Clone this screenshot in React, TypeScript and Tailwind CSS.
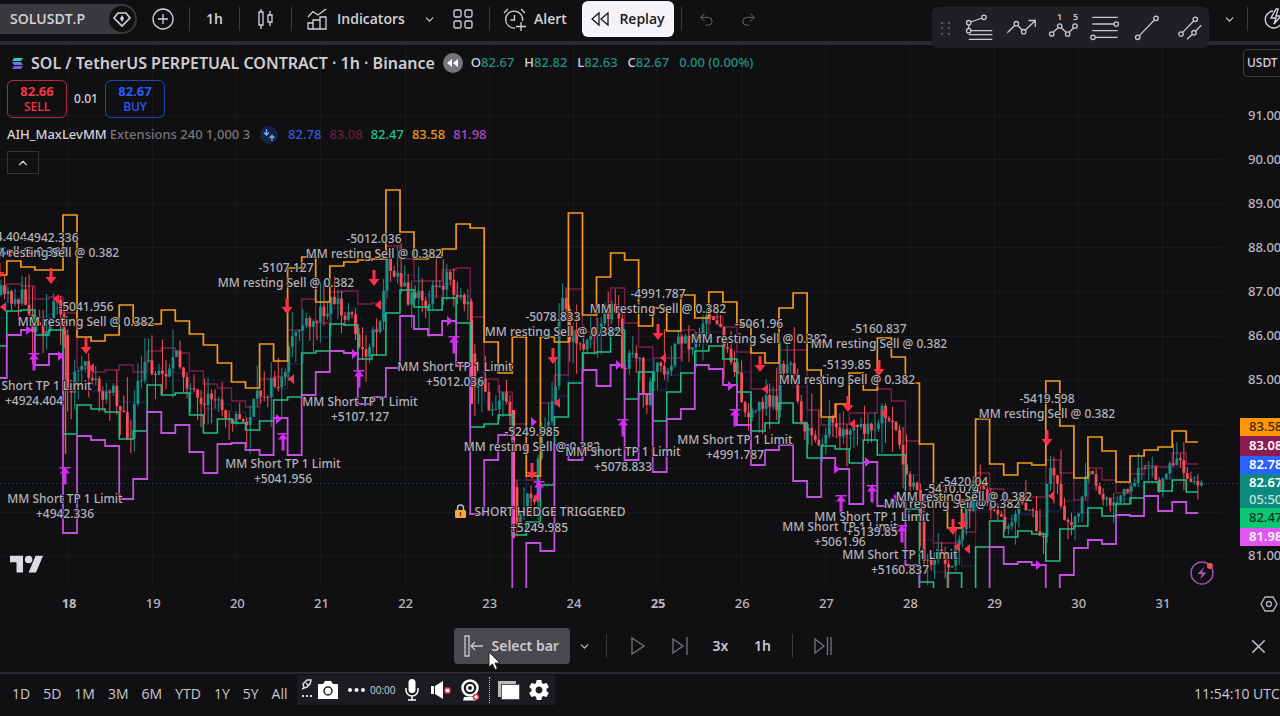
import { ReactNode } from "react";
import { ChevronDown, ChevronUp, Undo2, Redo2, X } from "lucide-react";

const STEP = 14.04;
const X0 = 63;
const FIRST = -5;
const LAST_X = 1198;

// one level per 4h block, 600 means the level is below the pane
const ORANGE = [
  275, 261, 267, 270, 270, 215, 337, 341, 335, 305, 323, 324, 310, 321, 334, 345, 363, 382, 388, 344, 361, 268, 257,
  302, 266, 262, 260, 259, 190, 232, 259, 257, 249, 224, 228, 342, 373, 337, 476, 337, 342, 213, 315, 277, 253, 260,
  326, 308, 331, 295, 318, 292, 302, 325, 353, 363, 308, 293, 370, 417, 404, 373, 390, 338, 357, 383, 444, 497, 528,
  500, 419, 464, 475, 463, 465, 381, 426, 478, 437, 451, 482, 456, 450, 447, 431, 442,
];
const PURPLE = [
  378, 335, 330, 365, 354, 533, 436, 440, 446, 499, 479, 412, 433, 425, 452, 473, 444, 443, 450, 455, 418, 455, 395,
  372, 351, 353, 404, 397, 368, 316, 329, 335, 321, 366, 514, 460, 435, 600, 543, 551, 445, 460, 370, 386, 365, 460,
  394, 472, 419, 409, 365, 369, 385, 425, 465, 450, 445, 481, 497, 458, 469, 504, 462, 506, 499, 565, 600, 600, 600,
  600, 600, 547, 564, 562, 565, 600, 575, 548, 540, 544, 515, 516, 496, 511, 502, 513,
];
const GREEN = [
  346, 311, 310, 335, 330, 434, 405, 409, 412, 439, 431, 385, 395, 393, 415, 433, 419, 423, 430, 421, 400, 397, 353,
  351, 324, 325, 359, 355, 313, 290, 307, 310, 298, 323, 427, 424, 415, 535, 522, 485, 417, 383, 353, 352, 330, 399,
  372, 421, 392, 373, 351, 346, 359, 392, 431, 423, 403, 423, 458, 446, 449, 463, 440, 455, 455, 509, 582, 600, 573,
  600, 547, 521, 537, 531, 534, 561, 529, 526, 508, 516, 504, 498, 482, 491, 480, 492,
];
const MAROON = [
  290, 284, 286, 299, 297, 313, 368, 372, 370, 365, 372, 351, 348, 353, 371, 384, 388, 401, 407, 379, 377, 330, 299,
  323, 292, 291, 304, 303, 246, 259, 281, 281, 270, 268, 317, 379, 392, 424, 480, 403, 375, 289, 332, 313, 288, 323,
  347, 358, 358, 330, 333, 317, 327, 352, 389, 390, 350, 350, 410, 425, 424, 413, 413, 389, 401, 441, 497, 543, 543,
  532, 473, 489, 500, 497, 497, 460, 473, 500, 468, 480, 493, 474, 466, 467, 453, 464,
];
const BLUE = GREEN.map((g, i) => Math.round((g + MAROON[i]) / 2));

// [x, close] turning points of the hourly series
const CLOSES = [
  [0, 295], [10, 297], [21, 298], [28, 305], [33, 328], [40, 318], [46, 335], [52, 310], [62, 305], [64, 330],
  [67, 395], [77, 370], [91, 372], [105, 405], [112, 375], [119, 408], [131, 442], [136, 395], [147, 362], [161, 375],
  [175, 358], [183, 370], [189, 385], [203, 418], [210, 395], [217, 400], [231, 415], [245, 425], [259, 395],
  [274, 385], [286, 380], [291, 335], [302, 325], [310, 330], [323, 308], [337, 297], [343, 323], [353, 307],
  [358, 348], [363, 356], [372, 337], [382, 313], [385, 267], [390, 260], [400, 280], [407, 297], [413, 292],
  [427, 305], [435, 287], [443, 290], [448, 262], [453, 280], [457, 307], [465, 300], [469, 313], [473, 395],
  [480, 382], [486, 395], [490, 407], [502, 397], [511, 415], [515, 520], [527, 503], [535, 495], [540, 425],
  [547, 420], [555, 400], [557, 360], [560, 290], [565, 292], [568, 340], [577, 337], [583, 347], [593, 337],
  [603, 313], [613, 310], [619, 325], [623, 367], [633, 357], [640, 367], [647, 405], [652, 375], [658, 360],
  [663, 380], [670, 380], [673, 347], [680, 340], [690, 343], [708, 320], [720, 330], [727, 347], [737, 367],
  [743, 410], [752, 420], [763, 400], [777, 403], [780, 367], [793, 370], [800, 410], [807, 437], [820, 440],
  [830, 423], [840, 440], [853, 427], [867, 430], [872, 440], [880, 410], [887, 427], [897, 430], [902, 473],
  [917, 487], [921, 513], [924, 567], [937, 553], [947, 560], [953, 563], [962, 527], [968, 510], [975, 483],
  [980, 493], [990, 500], [1000, 507], [1005, 528], [1017, 507], [1030, 507], [1037, 527], [1043, 547], [1047, 493],
  [1050, 467], [1057, 480], [1063, 513], [1070, 520], [1080, 510], [1087, 470], [1097, 487], [1107, 503], [1123, 493],
  [1140, 470], [1153, 470], [1160, 487], [1173, 460], [1183, 467], [1192, 483], [1202, 481],
];

function stepPath(levels: number[]) {
  let d = "";
  levels.forEach((y, i) => {
    const x1 = X0 + (FIRST + i) * STEP;
    const x2 = Math.min(x1 + STEP, LAST_X);
    d += `${i === 0 ? "M" : "L"}${x1.toFixed(1)} ${y}H${x2.toFixed(1)}`;
  });
  return d;
}

function closeAt(x: number) {
  const i = CLOSES.findIndex((p) => p[0] >= x);
  if (i <= 0) return CLOSES[0][1];
  const [ax, ay] = CLOSES[i - 1];
  const [bx, by] = CLOSES[i];
  return ay + ((by - ay) * (x - ax)) / (bx - ax);
}

function buildCandles() {
  let seed = 11;
  const rnd = () => {
    seed = (seed * 16807) % 2147483647;
    return seed / 2147483647;
  };
  const out = [];
  let prev = closeAt(0);
  for (let x = 1; x < 1202; x += 3.51) {
    // the last days trade in a tighter range
    const range = x > 1075 ? 0.6 : 1;
    const close = closeAt(x) + (rnd() - 0.5) * 20 * range;
    const top = Math.min(prev, close) - rnd() * rnd() * 40 * range;
    const bottom = Math.max(prev, close) + rnd() * rnd() * 40 * range;
    out.push({ x, open: prev, close, top, bottom, up: close < prev });
    prev = close;
  }
  return out;
}

const CANDLES = buildCandles();

const SELLS: [number, number, string][] = [
  [-1, 236, "-4924.404"],
  [51, 237, "-4942.336"],
  [86, 306, "-5041.956"],
  [286, 267, "-5107.127"],
  [374, 238, "-5012.036"],
  [553, 316, "-5078.833"],
  [532, 431, "-5249.985"],
  [658, 293, "-4991.787"],
  [759, 323, "-5061.96"],
  [847, 364, "-5139.85"],
  [879, 328, "-5160.837"],
  [952, 488, "-5410.074"],
  [964, 481, "-5420.04"],
  [1047, 398, "-5419.598"],
];

const EXITS: [number, number, string][] = [
  [34, 385, "+4924.404"],
  [65, 498, "+4942.336"],
  [283, 463, "+5041.956"],
  [360, 401, "+5107.127"],
  [455, 366, "+5012.036"],
  [623, 451, "+5078.833"],
  [735, 439, "+4991.787"],
  [840, 526, "+5061.96"],
  [872, 516, "+5139.85"],
  [900, 554, "+5160.837"],
];

const DOWN_ARROWS = [
  [-1, 263], [51, 268], [86, 338], [287, 298], [374, 270], [553, 348], [532, 463], [658, 324], [760, 356], [848, 396],
  [879, 360], [953, 519], [963, 513], [1047, 430],
];
const UP_ARROWS = [
  [34, 353], [65, 467], [283, 433], [359, 370], [454, 336], [539, 481], [623, 419], [735, 409], [841, 495],
  [872, 485], [902, 525],
];
const LEFT_MARKS = [
  [3, 307], [56, 299], [91, 368], [291, 379], [378, 305], [557, 403], [536, 497], [663, 358], [765, 389], [852, 424],
  [883, 413], [957, 547], [967, 549], [1051, 496],
];
const RIGHT_MARKS = [
  [29, 330], [61, 356], [279, 419], [355, 354], [450, 321], [534, 422], [619, 365], [731, 386], [837, 469],
  [868, 462], [897, 499], [1039, 565],
];

const DAYS = ["18", "19", "20", "21", "22", "23", "24", "25", "26", "27", "28", "29", "30", "31"];
const PRICES = ["91.00", "90.00", "89.00", "88.00", "87.00", "86.00", "85.00", "", "", "", "81.00"];
const RANGES = ["1D", "5D", "1M", "3M", "6M", "YTD", "1Y", "5Y", "All"];

function Divider() {
  return <span className="h-6 w-px shrink-0 bg-[#3c3b40]" />;
}

function Icon({ w = 28, h = 28, children }: { w?: number; h?: number; children: ReactNode }) {
  return (
    <svg
      width={w}
      height={h}
      viewBox={`0 0 ${w} ${h}`}
      fill="none"
      stroke="currentColor"
      strokeWidth="1.3"
      className="shrink-0 overflow-visible"
      aria-hidden="true"
    >
      {children}
    </svg>
  );
}

function TopBar() {
  return (
    <header className="flex h-[41px] shrink-0 items-center overflow-hidden pb-[3px] font-['Open_Sans',sans-serif] text-[#d5d3d7]">
      <div className="flex h-[30px] w-[137px] shrink-0 items-center justify-between rounded-r-full bg-[#3a393d] pl-[10px] pr-[2px]">
        <button className="text-sm font-semibold">SOLUSDT.P</button>
        <button aria-label="Symbol badge" className="flex size-[26px] items-center justify-center rounded-full bg-[#111013]">
          <Icon w={18} h={18}>
            <path d="M5 3H13L17 8L9 16L1 8Z" strokeWidth="1.6" />
            <path d="M9 5L11 8.500L9 12L7 8.500Z" fill="currentColor" stroke="none" />
          </Icon>
        </button>
      </div>
      <button aria-label="Add symbol" className="flex w-[52px] shrink-0 justify-center">
        <Icon w={22} h={22}>
          <circle cx="11" cy="11" r="10" />
          <path d="M11 6V16M6 11H16" />
        </Icon>
      </button>
      <Divider />
      <button className="w-[49px] shrink-0 text-sm font-semibold">1h</button>
      <Divider />
      <button aria-label="Chart type" className="flex w-[51px] shrink-0 justify-center">
        <Icon w={16} h={22}>
          <path d="M1 4H5V17H1ZM3 1V4M3 17V21M10 7H14V14H10ZM12 3V7M12 14V18" />
        </Icon>
      </button>
      <Divider />
      <button className="flex w-[121px] shrink-0 items-center gap-[10px] pl-[15px] text-sm font-semibold">
        <Icon w={20} h={20}>
          <path d="M1 8L6 2.500L11 6L19 0M1 20V14H6V20M6 20V11H13V20M13 20V8H19V20ZM1 20H19" />
        </Icon>
        Indicators
      </button>
      <button aria-label="Favourite indicators" className="flex w-[32px] shrink-0 justify-center">
        <ChevronDown size={13} strokeWidth={2} />
      </button>
      <button aria-label="Templates" className="flex w-[36px] shrink-0 justify-center">
        <Icon w={20} h={20}>
          <rect x="1" y="1" width="7" height="7" rx="1.500" />
          <rect x="12" y="1" width="7" height="7" rx="1.500" />
          <rect x="1" y="12" width="7" height="7" rx="1.500" />
          <rect x="12" y="12" width="7" height="7" rx="1.500" />
        </Icon>
      </button>
      <span className="w-2 shrink-0" />
      <Divider />
      <button className="flex w-[92px] shrink-0 items-center gap-2 pl-[13px] text-sm font-semibold">
        <Icon w={23} h={23}>
          <path d="M12 20A8.500 8.500 0 1 1 19.500 13M11.500 7V12H7.500M1 5L5 1M18 1L22 5M18 14V23M13 18.500H23" />
        </Icon>
        Alert
      </button>
      <button className="flex h-9 w-[92px] shrink-0 items-center justify-center gap-[10px] rounded-md bg-[#f6f3f8] text-sm font-semibold text-[#1a191c]">
        <Icon w={18} h={14}>
          <path d="M8 1V13L1 7ZM17 1V13L10 7Z" />
        </Icon>
        Replay
      </button>
      <span className="w-[7px] shrink-0" />
      <Divider />
      <button aria-label="Undo" className="flex w-[48px] shrink-0 justify-center text-[#66656a]">
        <Undo2 size={17} strokeWidth={1.4} />
      </button>
      <button aria-label="Redo" className="flex w-[36px] shrink-0 justify-center text-[#66656a]">
        <Redo2 size={17} strokeWidth={1.4} />
      </button>
      <div className="ml-auto flex shrink-0 items-center">
        <button aria-label="Layouts" className="flex w-[36px] justify-center">
          <ChevronDown size={13} strokeWidth={2} />
        </button>
        <Divider />
        <button aria-label="Quick search" className="flex w-8 justify-end overflow-hidden pl-4">
          <svg width="16" height="22" viewBox="0 0 16 22" fill="none" stroke="currentColor" strokeWidth="1.4">
            <path d="M9 3A8.500 8.500 0 1 0 17 16M12 1L7 10H12L10 16L17 8H12L14 1Z" />
          </svg>
        </button>
      </div>
    </header>
  );
}

function DrawingToolbar() {
  return (
    <div className="absolute right-[71px] top-[7px] flex h-[41px] items-center rounded-md bg-[#201f23] pl-[9px] pr-[4px] text-[#c9c7cc]">
      <Icon w={10} h={14}>
        <g fill="#59585d" stroke="none">
          <path d="M0 1h2v2H0zM7 1h2v2H7zM0 6h2v2H0zM7 6h2v2H7zM0 12h2v2H0zM7 12h2v2H7z" />
        </g>
      </Icon>
      <div className="ml-[14px] flex gap-3 pb-px">
        <button aria-label="Trend-based fib extension">
          <Icon w={30}>
            <path d="M5.500 9L17 5M3.700 12V15.500M6 17.700H27.300M3.700 21.700H27.300M3.700 26.300H27.300" />
            <circle cx="3.700" cy="9.700" r="2.200" />
            <circle cx="19" cy="4.300" r="2.200" />
            <circle cx="3.700" cy="17.700" r="2.200" />
          </Icon>
        </button>
        <button aria-label="Polyline">
          <Icon w={30}>
            <path d="M0.300 19.700L7.700 12.500M11 12.500L15 17M18.300 17L28 8M21.500 7.500H28.300V14" />
            <circle cx="9.300" cy="10.700" r="2.200" />
            <circle cx="16.700" cy="18.700" r="2.200" />
          </Icon>
        </button>
        <button aria-label="Elliott impulse wave">
          <Icon w={30}>
            <path d="M4.300 19.300L9 14.700M12.300 14.700L17 19.300M20.300 19.300L24.500 14.700" />
            <circle cx="2.700" cy="21" r="2.200" />
            <circle cx="10.700" cy="13" r="2.200" />
            <circle cx="18.700" cy="21" r="2.200" />
            <circle cx="26" cy="13" r="2.200" />
            <g fill="currentColor" stroke="none" fontSize="9" fontWeight="600">
              <text x="8" y="7">1</text>
              <text x="24" y="7">5</text>
            </g>
          </Icon>
        </button>
        <button aria-label="Fib retracement">
          <Icon w={30}>
            <path d="M1.300 4.300H26.700M1.300 11H23M1.300 17.700H26.700M4.300 24.300H26.700" />
            <circle cx="25.300" cy="11" r="2.200" />
            <circle cx="2" cy="24.300" r="2.200" />
          </Icon>
        </button>
        <button aria-label="Trend line">
          <Icon w={30}>
            <path d="M6.400 22.600L21.400 7" />
            <circle cx="4.700" cy="24.300" r="2.200" />
            <circle cx="23" cy="5.300" r="2.200" />
          </Icon>
        </button>
        <button aria-label="Parallel channel">
          <Icon w={30}>
            <path d="M7.600 19.400L18.700 8M12 26.300L17.400 21.300M20.600 18L26.300 12.300" />
            <circle cx="6" cy="21" r="2.200" />
            <circle cx="20.300" cy="6.300" r="2.200" />
            <circle cx="19" cy="19.700" r="2.200" />
          </Icon>
        </button>
      </div>
    </div>
  );
}

function Label({ x, y, children }: { x: number; y: number; children: ReactNode }) {
  return (
    <text x={x} y={y + 5}>
      {children}
    </text>
  );
}

function Chart() {
  return (
    <svg
      viewBox="0 45 1240 543"
      preserveAspectRatio="xMinYMin slice"
      className="block size-full"
      fill="none"
      role="img"
      aria-label="SOLUSDT.P hourly chart"
    >
      <g stroke="#19181c">
        {DAYS.map((d, i) => (
          <path key={d} d={`M${Math.round(69 + i * 84.15) - 0.5} 44V588`} />
        ))}
        {PRICES.map((_, i) => (
          <path key={i} d={`M0 ${Math.round(115 + i * 44.1) + 0.5}H1222`} />
        ))}
      </g>
      <path d="M0 483.500H1240" stroke="#2a5350" strokeDasharray="1 3" />

      <path d={stepPath(BLUE)} stroke="#1b2a63" />
      <path d={stepPath(MAROON)} stroke="#7d1d45" strokeWidth="1.4" />

      {CANDLES.map((c) => (
        <g key={c.x} fill={c.up ? "#1a8f84" : "#f4505a"}>
          <rect x={c.x - 0.5} y={c.top} width="1" height={c.bottom - c.top} />
          <rect
            x={c.x - 1.4}
            y={Math.min(c.open, c.close)}
            width="2.8"
            height={Math.max(1, Math.abs(c.open - c.close))}
          />
        </g>
      ))}
      <path d="M65.500 330V454" stroke="#f4505a" strokeWidth="1.500" />
      <path d="M471.500 320V404M513.500 410V538" stroke="#ff5a78" strokeWidth="3" />

      <path d={stepPath(GREEN)} stroke="#1fbd85" strokeWidth="1.600" />
      <path d={stepPath(ORANGE)} stroke="#f59a1d" strokeWidth="1.700" />
      <path d={stepPath(PURPLE)} stroke="#c350dc" strokeWidth="1.800" />

      <g fill="#ff2f48">
        {DOWN_ARROWS.map(([x, y]) => (
          <path key={`${x}-${y}`} d={`M${x - 1.5} ${y}h3v9h4l-5.500 7l-5.500-7h4z`} />
        ))}
        {LEFT_MARKS.map(([x, y]) => (
          <path key={`${x}-${y}`} d={`M${x - 3} ${y}l6-5v10z`} />
        ))}
      </g>
      <g fill="#d42cf0">
        {UP_ARROWS.map(([x, y]) => (
          <path key={`${x}-${y}`} d={`M${x - 5.5} ${y}h11v1.500h-4.500l4 5h-3.500v11h-3v-11h-3.500l4-5h-4.500z`} />
        ))}
        {RIGHT_MARKS.map(([x, y]) => (
          <path key={`${x}-${y}`} d={`M${x + 3} ${y}l-6-5v10z`} />
        ))}
      </g>

      <g
        className="text-[12px] font-medium"
        fill="#b5b3b8"
        stroke="#110f13"
        strokeWidth="1.500"
        paintOrder="stroke"
        textAnchor="middle"
      >
        {SELLS.map(([x, y, qty]) => (
          <g key={qty}>
            <Label x={x} y={y}>{qty}</Label>
            <Label x={x} y={y + 15}>MM resting Sell @ 0.382</Label>
          </g>
        ))}
        {EXITS.map(([x, y, qty]) => (
          <g key={qty}>
            <Label x={x} y={y}>MM Short TP 1 Limit</Label>
            <Label x={x} y={y + 15}>{qty}</Label>
          </g>
        ))}
        <Label x={550} y={511}>SHORT HEDGE TRIGGERED</Label>
        <Label x={539} y={527}>+5249.985</Label>
      </g>
      <path d="M457.500 510V508A3 3 0 0 1 463.500 508V510" stroke="#b9bcc4" strokeWidth="1.500" />
      <rect x="455" y="510" width="11" height="8" rx="1" fill="#f5a742" />
      <path d="M460.500 512V516" stroke="#6b3c0c" strokeWidth="1.500" />

      <g fill="#dddbe0" transform="translate(10 552) scale(0.93)">
        <path d="M14 22H7V11H0V4h14v18zM28 22h-8l7.500-18h8L28 22z" />
        <circle cx="20" cy="8" r="4" />
      </g>

      <circle cx="1202" cy="573" r="11" stroke="#9a4fa8" strokeWidth="1.500" />
      <path d="M1204 567L1197.500 574H1202L1200 579.500L1206.500 572.500H1202Z" fill="#b057c0" />
      <circle cx="1210" cy="566" r="3" fill="#f4505a" />
    </svg>
  );
}

function Legend() {
  return (
    <div className="absolute left-[7px] top-[6px]">
      <div className="flex h-6 items-center whitespace-nowrap">
        <svg width="15" height="13" viewBox="0 0 15 13" className="ml-[3px]" aria-hidden="true">
          <path d="M4 1H13L11 4H2Z" fill="#2fd0b0" />
          <path d="M2 5H11L13 8H4Z" fill="#5a7fe0" />
          <path d="M4 9H13L11 12H2Z" fill="#8a4ff0" />
        </svg>
        <h1 className="ml-[6px] text-base font-semibold text-[#cfcdd1]">SOL / TetherUS PERPETUAL CONTRACT · 1h · Binance</h1>
        <span className="ml-2 flex size-5 items-center justify-center rounded-full bg-[#77757a]">
          <svg width="11" height="8" viewBox="0 0 11 8" fill="#fff" aria-hidden="true">
            <path d="M5 0V8L0 4ZM11 0V8L6 4Z" />
          </svg>
        </span>
        <dl className="ml-2 flex gap-[10px] text-[13px] font-medium text-[#23927f]">
          <div className="flex"><dt className="text-[#d5d3d7]">O</dt><dd>82.67</dd></div>
          <div className="flex"><dt className="text-[#d5d3d7]">H</dt><dd>82.82</dd></div>
          <div className="flex"><dt className="text-[#d5d3d7]">L</dt><dd>82.63</dd></div>
          <div className="flex"><dt className="text-[#d5d3d7]">C</dt><dd>82.67</dd></div>
          <div>0.00 (0.00%)</div>
        </dl>
      </div>
      <div className="mt-[5px] flex items-center text-xs font-medium">
        <button className="flex h-[38px] w-[60px] flex-col items-center justify-center rounded-md border border-[#b02b3f] leading-[15px] text-[#f23645]">
          <b className="text-[13px]">82.66</b>
          SELL
        </button>
        <span className="w-[38px] text-center text-[#d5d3d7]">0.01</span>
        <button className="flex h-[38px] w-[60px] flex-col items-center justify-center rounded-md border border-[#2444b4] leading-[15px] text-[#2b5cf6]">
          <b className="text-[13px]">82.67</b>
          BUY
        </button>
      </div>
      <div className="mt-[7px] flex h-5 items-center gap-2 whitespace-nowrap text-[13px] font-medium">
        <div className="flex gap-[3px]">
          <span className="text-[#d5d3d7]">AIH_MaxLevMM</span>
          <span className="text-[#77757a]">Extensions 240 1,000 3</span>
        </div>
        <span className="mx-[2px] flex size-[18px] items-center justify-center rounded-full bg-[#142440] text-[#7fb0ff]">
          <Icon w={14} h={14}>
            <path d="M4.500 1V7M2 4.500L4.500 7L7 4.500M10 13V8M7.500 10L10 7.500L12.500 10" />
          </Icon>
        </span>
        <span className="text-[#2f5bd8]">82.78</span>
        <span className="text-[#6b1c38]">83.08</span>
        <span className="text-[#1fc48c]">82.47</span>
        <span className="text-[#f0981e]">83.58</span>
        <span className="text-[#b048c4]">81.98</span>
      </div>
      <button aria-label="Collapse legend" className="mt-[6px] flex h-[23px] w-8 items-center justify-center border border-[#343338] text-[#d5d3d7]">
        <ChevronUp size={14} strokeWidth={2} />
      </button>
    </div>
  );
}

function PriceAxis() {
  return (
    <aside className="relative w-10 shrink-0 overflow-hidden text-[13px] font-medium text-[#bab8bd]">
      <button className="absolute left-[3px] top-[4px] h-7 w-14 rounded border border-[#3c3b40] pl-[3px] text-left text-xs text-[#d5d3d7]">
        USDT
      </button>
      <ul className="mt-[49px] pl-2">
        {PRICES.map((p, i) => (
          <li key={i} className="flex h-11 items-center">{p}</li>
        ))}
      </ul>
      <div className="absolute inset-x-0 top-[373px] text-white *:flex *:items-center *:pl-[9px]">
        <div className="h-[18px] bg-[#ff9800] text-[#3a2606]">83.58</div>
        <div className="h-5 bg-[#8d1b50] font-semibold">83.08</div>
        <div className="h-[18px] bg-[#2962ff] font-semibold">82.78</div>
        <div className="h-[17px] bg-[#0c8a7e] font-semibold">82.67</div>
        <div className="h-[17px] bg-[#0c8a7e] text-[#bfe3df]">05:50</div>
        <div className="h-5 bg-[#0bc774] text-[#06331f]">82.47</div>
        <div className="h-[18px] bg-[#e056f4] font-semibold">81.98</div>
      </div>
    </aside>
  );
}

function TimeAxis() {
  return (
    <div className="flex h-8 shrink-0 items-center text-[13px] font-medium text-[#bab8bd]">
      <ol className="ml-[27px] mr-[35px] grid flex-1 grid-cols-[repeat(14,1fr)] text-center">
        {DAYS.map((d) => (
          <li key={d} className={d === "18" || d === "25" ? "font-bold" : ""}>{d}</li>
        ))}
      </ol>
      <button aria-label="Axis settings" className="flex w-10 justify-center pl-[17px]">
        <Icon w={18} h={16}>
          <path d="M5 1H13L17 8L13 15H5L1 8Z" />
          <circle cx="9" cy="8" r="2.500" />
        </Icon>
      </button>
    </div>
  );
}

function ReplayBar() {
  return (
    <div className="flex h-[52px] shrink-0 items-center text-sm font-semibold text-[#cbc9ce]">
      <div className="flex flex-1 items-center justify-center pl-[59px]">
        <button className="relative flex h-9 w-[116px] items-center gap-2 whitespace-nowrap rounded bg-[#49484c] pl-[10px]">
          <Icon w={20} h={20}>
            <path d="M1 0H5V20H1ZM19 10H7M11 6L7 10L11 14" />
          </Icon>
          Select bar
          <svg width="13" height="19" viewBox="0 0 13 19" className="absolute left-[34px] top-[23px] z-10" aria-hidden="true">
            <path d="M1 1V16L4.500 13L7 18.500L9.500 17.500L7 12H12Z" fill="#fff" stroke="#222" />
          </svg>
        </button>
        <button aria-label="Select bar options" className="flex w-[30px] justify-center">
          <ChevronDown size={13} strokeWidth={2} />
        </button>
        <span className="w-[6px]" />
        <Divider />
        <button aria-label="Play" className="flex w-[62px] justify-center text-[#77757a]">
          <Icon w={14} h={18}>
            <path d="M1 1L13 9L1 17Z" />
          </Icon>
        </button>
        <button aria-label="Forward" className="flex w-[22px] justify-center text-[#77757a]">
          <Icon w={16} h={18}>
            <path d="M1 2L11 9L1 16ZM15 0V18" />
          </Icon>
        </button>
        <button className="ml-[9px] w-[42px]">3x</button>
        <button className="w-[42px]">1h</button>
        <span className="w-2" />
        <Divider />
        <button aria-label="Jump to real time" className="flex w-[60px] justify-center text-[#77757a]">
          <Icon w={18} h={18}>
            <path d="M1 2L10 9L1 16ZM13.500 0V18M17 0V18" />
          </Icon>
        </button>
      </div>
      <button aria-label="Close replay" className="mr-[10px]">
        <X size={23} strokeWidth={1.4} />
      </button>
    </div>
  );
}

function Recorder() {
  return (
    <div className="absolute left-[297px] top-px flex h-[30px] w-[258px] items-center bg-[#1c1b1f] text-white">
      <svg width="12" height="22" viewBox="0 0 12 22" className="ml-1" aria-hidden="true">
        <path d="M3 9L2 5L6 1L10 1L9 5L6 8ZM5 4L7 6M3 9L1 10" fill="none" stroke="#ddd" strokeWidth="1.500" />
        <path d="M1 16h2v2H1zM5 16h2v2H5zM9 16h2v2H9z" fill="#ddd" />
      </svg>
      <button aria-label="Take photo" className="ml-[5px]">
        <svg width="20" height="18" viewBox="0 0 20 18">
          <path d="M0 3H5L7 0H13L15 3H20V18H0Z" fill="#fff" />
          <circle cx="10" cy="10" r="4" fill="#fff" stroke="#222" strokeWidth="1.500" />
        </svg>
      </button>
      <button aria-label="More" className="ml-2">
        <svg width="20" height="6" viewBox="0 0 20 6" fill="#fff">
          <circle cx="4" cy="3" r="2" />
          <circle cx="10.500" cy="3" r="2" />
          <circle cx="17" cy="3" r="2" />
        </svg>
      </button>
      <time className="ml-1 w-[25px] font-['Open_Sans',sans-serif] text-[10px] text-[#d5d3d7]">00:00</time>
      <button aria-label="Microphone" className="ml-[10px]">
        <svg width="14" height="22" viewBox="0 0 14 22">
          <rect x="3.500" y="0" width="7" height="14" rx="3.500" fill="#fff" />
          <path d="M1 9V11A6 6 0 0 0 13 11V9M7 17V21M3 21H11" fill="none" stroke="#fff" strokeWidth="1.500" />
        </svg>
      </button>
      <button aria-label="Speaker" className="ml-3">
        <svg width="20" height="18" viewBox="0 0 20 18">
          <path d="M0 5H3V13H0ZM4 5L12 0V18L4 13Z" fill="#fff" />
          <rect x="14" y="7" width="5" height="5" rx="1" fill="#fff" stroke="#d8304a" strokeWidth="1.500" />
        </svg>
      </button>
      <button aria-label="Webcam" className="ml-[10px]">
        <svg width="20" height="22" viewBox="0 0 20 22">
          <circle cx="9" cy="9" r="7.500" fill="none" stroke="#fff" strokeWidth="2.500" />
          <circle cx="9" cy="9" r="4" fill="#fff" />
          <circle cx="9" cy="9" r="2" fill="#222" />
          <path d="M3 18H13L15 21.500H2Z" fill="#fff" />
          <circle cx="15" cy="18" r="2.500" fill="#fff" stroke="#d8304a" strokeWidth="1.500" />
        </svg>
      </button>
      <span className="ml-2 h-[26px] border-l border-dotted border-[#c9c7cc]" />
      <button aria-label="Window" className="ml-2">
        <svg width="22" height="19" viewBox="0 0 22 19">
          <path d="M0 0H18V3H3V16H0Z" fill="#b9b9bc" />
          <rect x="3.500" y="3.500" width="18" height="15" fill="#fff" stroke="#1c1b1f" strokeWidth="0.500" />
        </svg>
      </button>
      <button aria-label="Recorder settings" className="ml-2">
        <svg width="22" height="22" viewBox="1 1 22 22" fill="#fff">
          <path d="M19.430 12.980c.040-.320.070-.640.070-.980s-.030-.660-.070-.980l2.110-1.650c.190-.150.240-.420.120-.640l-2-3.460c-.120-.220-.390-.300-.610-.220l-2.490 1c-.520-.400-1.080-.730-1.690-.980l-.380-2.650C14.460 2.180 14.250 2 14 2h-4c-.250 0-.460.180-.490.420l-.380 2.650c-.610.250-1.170.590-1.690.980l-2.490-1c-.230-.090-.490 0-.610.220l-2 3.460c-.130.220-.070.490.120.640l2.110 1.650c-.040.320-.070.650-.070.980s.030.660.070.980l-2.110 1.650c-.190.150-.240.420-.120.640l2 3.460c.120.220.390.300.610.220l2.490-1c.520.400 1.080.730 1.690.980l.380 2.650c.030.240.240.420.490.420h4c.250 0 .460-.180.490-.420l.380-2.650c.610-.250 1.170-.590 1.690-.980l2.490 1c.230.090.490 0 .610-.220l2-3.460c.120-.220.070-.490-.120-.640l-2.110-1.650zM12 15.500c-1.930 0-3.500-1.570-3.500-3.500s1.570-3.500 3.500-3.500 3.500 1.570 3.500 3.500-1.570 3.500-3.500 3.500z" />
        </svg>
      </button>
    </div>
  );
}

function BottomBar() {
  return (
    <footer className="relative flex h-[44px] shrink-0 items-center border-t-2 border-[#2b2a2e] pb-[2px] font-['Open_Sans',sans-serif] text-sm text-[#cbc9ce]">
      <nav className="flex gap-[13px] pl-3">
        {RANGES.map((r) => (
          <button key={r}>{r}</button>
        ))}
      </nav>
      <button className="ml-auto w-[86px] overflow-hidden whitespace-nowrap text-left">11:54:10 UTC</button>
      <Recorder />
    </footer>
  );
}

export default function App() {
  return (
    <div className="relative flex h-screen flex-col overflow-hidden bg-[#100f12] font-['Noto_Sans',sans-serif]">
      <TopBar />
      <div className="h-1 shrink-0 bg-[#2b2a2e]" />
      <main className="flex min-h-0 flex-1 flex-col">
        <div className="flex min-h-0 flex-1">
          <div className="relative min-w-0 flex-1">
            <Chart />
            <Legend />
          </div>
          <PriceAxis />
        </div>
        <TimeAxis />
        <ReplayBar />
      </main>
      <BottomBar />
      <DrawingToolbar />
    </div>
  );
}
